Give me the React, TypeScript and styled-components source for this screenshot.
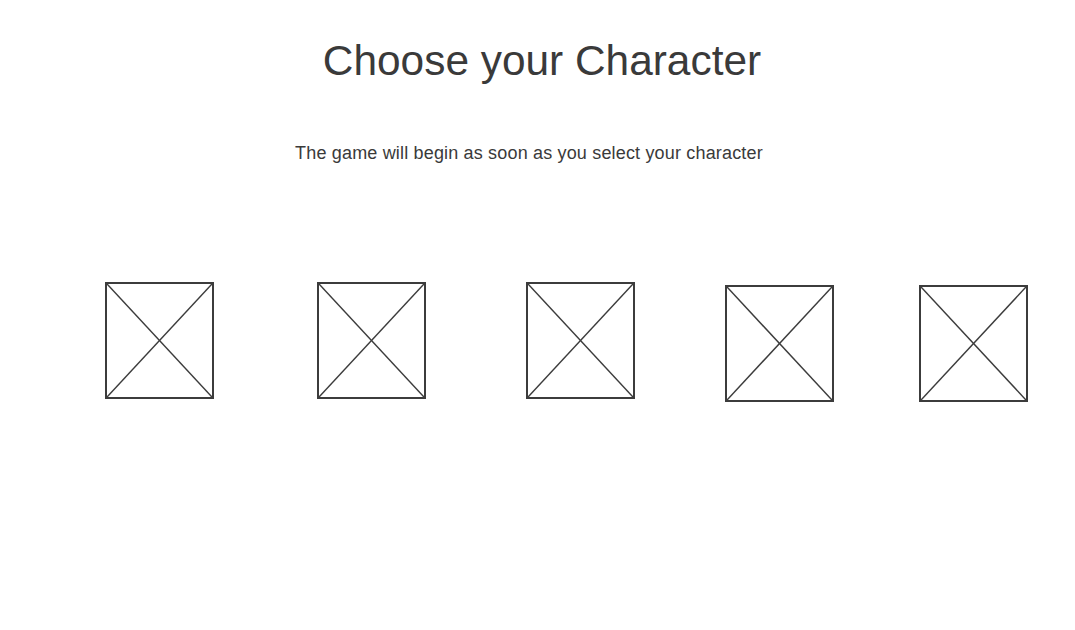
import React from "react";
import styled, { createGlobalStyle } from "styled-components";

const Global = createGlobalStyle`
  html, body { margin: 0; padding: 0; background: #ffffff; }
  body { font-family: "Liberation Sans", Arial, sans-serif; color: #3a3a3a; }
`;

const Page = styled.main`
  width: 1075px;
  height: 630px;
  display: flex;
  flex-direction: column;
`;

const Title = styled.h1`
  margin: 37px 0 0 0;
  padding-left: 9px;
  font-size: 42.4px;
  line-height: 48px;
  font-weight: 400;
  text-align: center;
  color: #3a3a3a;
`;

const Subtitle = styled.p`
  margin: 57px 0 0 0;
  padding-right: 17px;
  font-size: 18px;
  line-height: 22px;
  letter-spacing: 0.17px;
  text-align: center;
  color: #3a3a3a;
`;

const Row = styled.div`
  display: flex;
  align-items: flex-start;
  padding-left: 105px;
  margin-top: 118px;
`;

const Card = styled.div<{ $ml: number; $mt: number }>`
  width: 109px;
  height: 117px;
  box-sizing: border-box;
  border: 2px solid #3c3c3c;
  margin-left: ${(p) => p.$ml}px;
  margin-top: ${(p) => p.$mt}px;
  flex: none;
  display: flex;
  svg { display: block; width: 100%; height: 100%; }
`;

const cards = [
  { ml: 0, mt: 0 },
  { ml: 103, mt: 0 },
  { ml: 100, mt: 0 },
  { ml: 90, mt: 3 },
  { ml: 85, mt: 3 },
];

const Placeholder = () => (
  <svg viewBox="0 0 105 113" preserveAspectRatio="none">
    <line x1="0" y1="0" x2="105" y2="113" stroke="#3c3c3c" strokeWidth="1.5" />
    <line x1="105" y1="0" x2="0" y2="113" stroke="#3c3c3c" strokeWidth="1.5" />
  </svg>
);

export default function App() {
  return (
    <>
      <Global />
      <Page>
        <Title>Choose your Character</Title>
        <Subtitle>The game will begin as soon as you select your character</Subtitle>
        <Row>
          {cards.map((c, i) => (
            <Card key={i} $ml={c.ml} $mt={c.mt}>
              <Placeholder />
            </Card>
          ))}
        </Row>
      </Page>
    </>
  );
}
